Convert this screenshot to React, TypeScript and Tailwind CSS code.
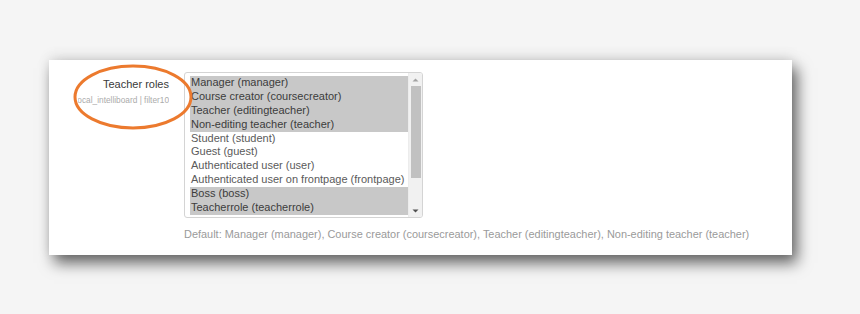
const roles = [
  { label: "Manager (manager)", selected: true },
  { label: "Course creator (coursecreator)", selected: true },
  { label: "Teacher (editingteacher)", selected: true },
  { label: "Non-editing teacher (teacher)", selected: true },
  { label: "Student (student)", selected: false },
  { label: "Guest (guest)", selected: false },
  { label: "Authenticated user (user)", selected: false },
  { label: "Authenticated user on frontpage (frontpage)", selected: false },
  { label: "Boss (boss)", selected: true },
  { label: "Teacherrole (teacherrole)", selected: true },
  { label: "Participant (participant)", selected: false },
];

function RoleSelect() {
  return (
    <div className="flex w-[239px] h-[146px] border border-[#d4d4d4] rounded-[3px] bg-white overflow-hidden">
      {/* options list */}
      <div className="flex-1 overflow-hidden pl-[5px] pt-[3px]">
        {roles.map((r) => (
          <div
            key={r.label}
            className={
              r.selected
                ? "h-[13.9px] leading-[13.9px] pl-[1px] whitespace-nowrap bg-[#c8c8c8] text-[#3c3c3c]"
                : "h-[13.9px] leading-[13.9px] pl-[1px] whitespace-nowrap text-[#5a5a5a]"
            }
          >
            {r.label}
          </div>
        ))}
      </div>
      {/* scrollbar */}
      <div className="w-[14px] flex flex-col items-center bg-[#f1f1f1] border-l border-[#ececec]">
        <div className="h-[13px] flex items-center justify-center">
          <svg width="7" height="4" viewBox="0 0 7 4">
            <path d="M0.5 3.5 L3.5 0.5 L6.5 3.5 Z" fill="#a3a3a3" />
          </svg>
        </div>
        <div className="w-[10px] h-[92px] bg-[#c1c1c1]" />
        <div className="flex-1" />
        <div className="h-[13px] flex items-center justify-center">
          <svg width="7" height="4" viewBox="0 0 7 4">
            <path d="M0.5 0.5 L3.5 3.5 L6.5 0.5 Z" fill="#505050" />
          </svg>
        </div>
      </div>
    </div>
  );
}

export default function App() {
  return (
    <div className="w-[860px] h-[314px] bg-[#f5f5f5] pt-[60px] pl-[49px] overflow-hidden font-['Liberation_Sans',Arial,sans-serif]">
      <div className="relative w-[743px] h-[195px] bg-white shadow-[5px_8px_14px_rgba(0,0,0,0.6),0_-4px_12px_rgba(0,0,0,0.08)] pt-[12px]">
        <div className="flex">
          {/* label column */}
          <div className="w-[120px] flex flex-col items-end pt-[6px]">
            <div className="text-[11px] leading-[13px] text-[#3a3a3a]">Teacher roles</div>
            <div className="w-[91px] mt-[4px] flex justify-end overflow-hidden">
              <span className="whitespace-nowrap text-[8.3px] leading-[11px] font-medium text-[#ababab]">
                local_intelliboard | filter10
              </span>
            </div>
          </div>

          {/* field column */}
          <div className="ml-[15px] flex flex-col text-[11px]">
            <RoleSelect />
            <div className="mt-[9px] text-[10.95px] leading-[14px] text-[#9a9a9a] whitespace-nowrap">
              Default: Manager (manager), Course creator (coursecreator), Teacher (editingteacher), Non-editing teacher (teacher)
            </div>
          </div>
        </div>

        {/* orange annotation ring */}
        <svg className="absolute left-[23px] top-[3px]" width="122" height="68" viewBox="0 0 122 68">
          <ellipse cx="61" cy="34" rx="58" ry="31" fill="none" stroke="#ec7a2e" strokeWidth="3" />
        </svg>
      </div>
    </div>
  );
}
